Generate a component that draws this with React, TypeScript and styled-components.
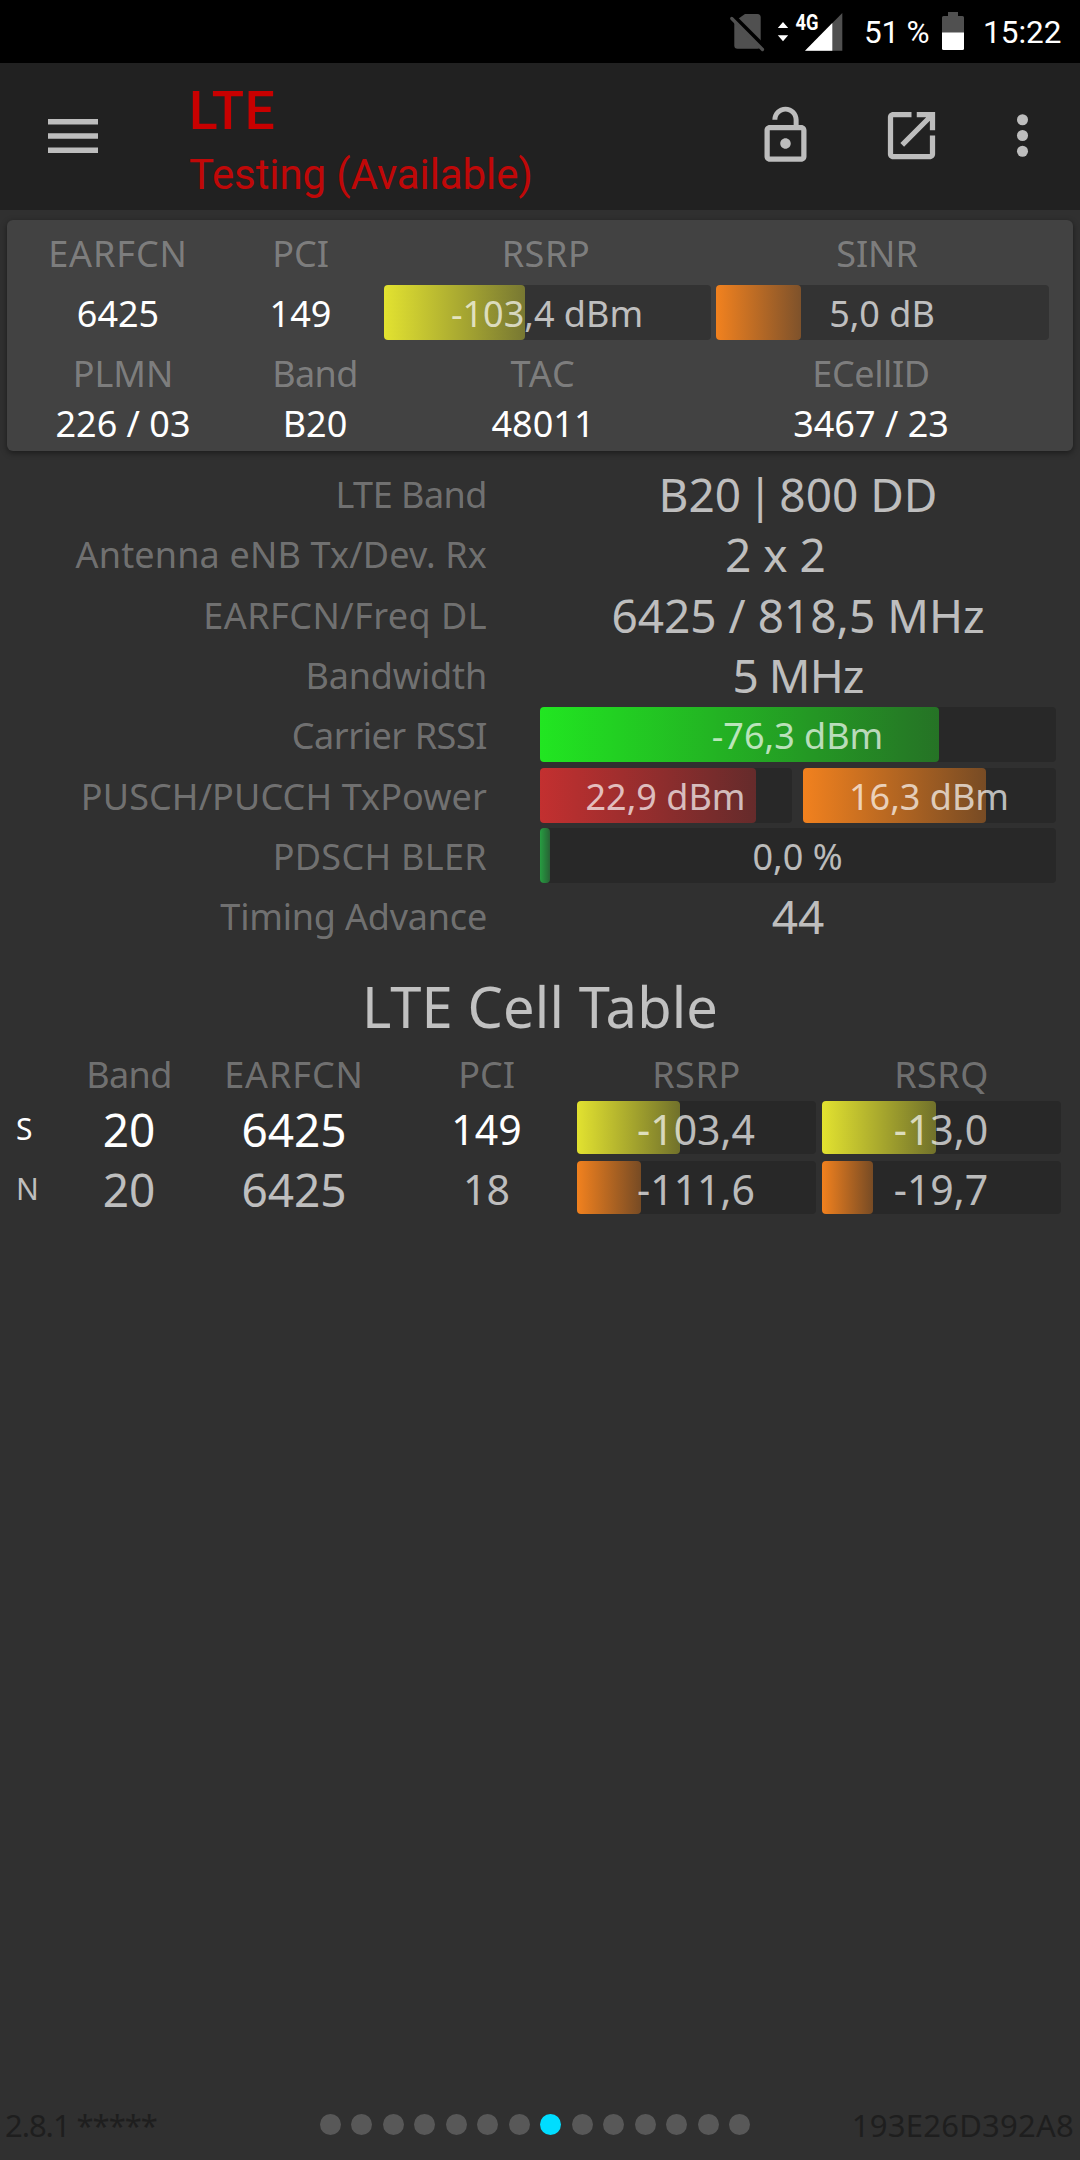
import React from "react";
import styled, { createGlobalStyle } from "styled-components";

const GlobalStyle = createGlobalStyle`
  * { box-sizing: border-box; }
  html, body { margin: 0; padding: 0; background: #303030; }
`;

const Screen = styled.div`
  width: 1080px;
  height: 2160px;
  display: flex;
  flex-direction: column;
  overflow: hidden;
  background: #303030;
  color: rgba(255, 255, 255, 0.7);
  font-family: "Noto Sans", "Open Sans", sans-serif;
  white-space: nowrap;
`;

const StatusBar = styled.header`
  height: 63px;
  flex: none;
  display: flex;
  align-items: center;
  background: #000;
  color: #fff;
  font: 400 31.5px/63px Roboto, sans-serif;
  padding: 0 20px 0 728px;
`;

const StatusGlyphs = styled.svg`
  flex: none;
  width: 120px;
  height: 63px;
  display: block;
`;

const StatusText = styled.span<{ $left: number; $track?: number }>`
  margin-left: ${(p) => p.$left}px;
  letter-spacing: ${(p) => p.$track ?? 0}px;
  padding-top: 2px;
`;

const BatteryIcon = styled.svg`
  flex: none;
  width: 22px;
  height: 63px;
  margin-left: 12px;
  display: block;
`;

const AppBar = styled.nav`
  height: 147px;
  flex: none;
  display: flex;
  align-items: center;
  padding: 0 26px 2px 48px;
  background: #212121;
`;

const MenuIcon = styled.svg`
  width: 50px;
  height: 36px;
  flex: none;
  fill: #bdbdbd;
`;

const Titles = styled.div`
  margin-left: 91px;
  padding-top: 14px;
  flex: 1;
  display: flex;
  flex-direction: column;
  font-family: Roboto, sans-serif;
  color: #c80000;
`;

const Title = styled.h1`
  margin: 0;
  font-size: 53px;
  line-height: 64px;
  font-weight: 500;
  letter-spacing: 0.6px;
`;

const Subtitle = styled.div`
  font-size: 42px;
  line-height: 63px;
  letter-spacing: -0.1px;
  color: #c00808;
`;

const ActionIcon = styled.svg<{ $gap: number }>`
  width: 63px;
  height: 63px;
  flex: none;
  margin-left: ${(p) => p.$gap}px;
  fill: #bdbdbd;
`;

const Card = styled.section`
  flex: none;
  margin: 10px 7px 0;
  height: 231px;
  padding-top: 8px;
  border-radius: 6px;
  background: #424242;
  box-shadow: 0 2px 6px rgba(0, 0, 0, 0.45);
`;

const CardRow = styled.div<{ $cols: string; $height?: number; $top?: number }>`
  display: grid;
  grid-template-columns: ${(p) => p.$cols};
  align-items: center;
  justify-items: center;
  height: ${(p) => p.$height ?? 50}px;
  margin-top: ${(p) => p.$top ?? 0}px;
`;

const Label = styled.span<{ $track?: number; $shift?: number }>`
  display: inline-block;
  font-size: 36px;
  line-height: 50px;
  padding-top: ${(p) => p.$shift ?? 2}px;
  color: rgba(255, 255, 255, 0.32);
  letter-spacing: ${(p) => p.$track ?? 0}px;
`;

const Value = styled.span<{ $size?: number; $bright?: boolean; $track?: number; $shift?: number }>`
  font-size: ${(p) => p.$size ?? 36}px;
  line-height: 50px;
  color: ${(p) => (p.$bright ? "#fff" : "rgba(255, 255, 255, 0.7)")};
  letter-spacing: ${(p) => p.$track ?? 0}px;
  padding-top: ${(p) => p.$shift ?? 0}px;
`;

const BandPrefix = styled.span`
  word-spacing: -5.5px;
`;

const Track = styled.div<{ $width: number; $height?: number; $base?: string; $gap?: number }>`
  display: grid;
  flex: none;
  width: ${(p) => p.$width}px;
  height: ${(p) => p.$height ?? 55}px;
  margin-left: ${(p) => p.$gap ?? 0}px;
  border-radius: 4px;
  background: ${(p) => p.$base ?? "#282828"};
  > * { grid-area: 1 / 1; }
`;

const Fill = styled.div<{ $rgb: string; $from: number }>`
  height: 100%;
  border-radius: 4px;
  background: linear-gradient(90deg, rgba(${(p) => p.$rgb}, ${(p) => p.$from}), rgba(${(p) => p.$rgb}, 0.38));
`;

const Reading = styled.span<{ $size: number; $track: number }>`
  align-self: center;
  justify-self: center;
  font-size: ${(p) => p.$size}px;
  line-height: 50px;
  padding: 2px 1px 0 0;
  letter-spacing: ${(p) => p.$track}px;
`;

const YELLOW = "232, 232, 48";
const ORANGE = "248, 132, 30";
const GREEN = "33, 236, 33";
const RED = "200, 48, 48";
const TEAL = "38, 190, 72";

type MeterProps = {
  width: number;
  fill: number;
  rgb: string;
  text: string;
  height?: number;
  base?: string;
  gap?: number;
  size?: number;
  track?: number;
  from?: number;
};

function Meter({ width, fill, rgb, text, height, base, gap, size = 36, track = 0, from = 0.97 }: MeterProps) {
  return (
    <Track $width={width} $height={height} $base={base} $gap={gap}>
      <Fill $rgb={rgb} $from={from} style={{ width: fill }} />
      <Reading $size={size} $track={track}>{text}</Reading>
    </Track>
  );
}

const Details = styled.section`
  flex: none;
  display: flex;
  flex-direction: column;
  margin-top: 13px;
`;

const DetailRow = styled.div<{ $height: number }>`
  display: flex;
  align-items: center;
  height: ${(p) => p.$height}px;
`;

const DetailLabel = styled.div`
  width: 540px;
  padding-right: 53px;
  text-align: right;
`;

const DetailValue = styled.div<{ $offset?: number }>`
  width: 516px;
  display: flex;
  align-items: center;
  justify-content: center;
  padding-right: ${(p) => p.$offset ?? 0}px;
`;

const TableTitle = styled.h2`
  flex: none;
  margin: 20px 0 0;
  height: 80px;
  text-align: center;
  font-size: 56px;
  font-weight: 400;
  line-height: 80px;
  letter-spacing: 0.15px;
`;

const TableRow = styled.div<{ $height: number; $gap?: number }>`
  flex: none;
  display: grid;
  grid-template-columns: 66px 126px 204px 181px 239px 6px 239px;
  align-items: center;
  justify-items: center;
  height: ${(p) => p.$height}px;
  margin-top: ${(p) => p.$gap ?? 0}px;
`;

const Tag = styled(Value)`
  justify-self: start;
  padding-left: 16px;
`;

const Footer = styled.footer`
  margin-top: auto;
  flex: none;
  height: 71px;
  display: grid;
  grid-template-columns: 314.5px 430.5px 1fr;
  align-items: center;
  padding: 0 6px 0 5px;
  color: #1e1e1e;
  font-size: 31px;
`;

const FooterNote = styled.span<{ $end?: boolean; $track: number }>`
  justify-self: ${(p) => (p.$end ? "end" : "start")};
  letter-spacing: ${(p) => p.$track}px;
  padding-top: 1px;
`;

const Pager = styled.div`
  display: flex;
  gap: 10.5px;
`;

const Dot = styled.i<{ $active: boolean }>`
  flex: none;
  width: 21px;
  height: 21px;
  border-radius: 50%;
  background: ${(p) => (p.$active ? "#00ddff" : "#585858")};
`;

export default function App() {
  return (
    <Screen>
      <GlobalStyle />
      <StatusBar>
        <StatusGlyphs viewBox="728 0 120 63">
          <path d="M745 14H757.5Q760.7 14 760.7 17.500V45.500Q760.7 48.700 757.5 48.700H737.5Q734.300 48.700 734.300 45.500V21.500Z" fill="#505050" />
          <path d="M732 15L766 49" stroke="#000" strokeWidth="5" />
          <path d="M731.800 18.500L762.500 49.500" stroke="#505050" strokeWidth="3.200" strokeLinecap="round" />
          <path d="M777.800 28L783 22L788.200 28ZM777.800 35.200L783 41.200L788.200 35.200Z" fill="#fff" />
          <text x="795.500" y="30" fill="#fff" fontFamily="Roboto" fontWeight="700" fontSize="22.500" textLength="23" lengthAdjust="spacingAndGlyphs">4G</text>
          <path d="M842.300 13V50.700H805Z" fill="#505050" />
          <path d="M832.300 23.100V50.700H805Z" fill="#fff" />
        </StatusGlyphs>
        <StatusText $left={16} $track={-0.2}>51 %</StatusText>
        <BatteryIcon viewBox="0 0 22 63">
          <path d="M6 12H16V16H20.500Q22 16 22 17.500V33H0V17.500Q0 16 1.500 16H6Z" fill="#505050" />
          <path d="M0 32.500H22V48.500Q22 50 20.500 50H1.500Q0 50 0 48.500Z" fill="#fff" />
        </BatteryIcon>
        <StatusText $left={19.5}>15:22</StatusText>
      </StatusBar>

      <AppBar>
        <MenuIcon viewBox="0 0 50 36">
          <path d="M0 1H50V6.500H0ZM0 15.300H50V20.800H0ZM0 29.600H50V35.100H0Z" />
        </MenuIcon>
        <Titles>
          <Title>LTE</Title>
          <Subtitle>Testing (Available)</Subtitle>
        </Titles>
        <ActionIcon $gap={0} viewBox="0 0 24 24">
          <path d="M12 17c1.100 0 2-.9 2-2s-.9-2-2-2-2 .9-2 2 .9 2 2 2zm6-9h-1V6c0-2.760-2.240-5-5-5S7 3.240 7 6h1.900c0-1.710 1.390-3.100 3.100-3.100 1.710 0 3.100 1.390 3.100 3.100v2H6c-1.100 0-2 .9-2 2v10c0 1.100.9 2 2 2h12c1.100 0 2-.9 2-2V10c0-1.100-.9-2-2-2zm0 12H6V10h12v10z" />
        </ActionIcon>
        <ActionIcon $gap={63} viewBox="0 0 24 24">
          <path d="M19 19H5V5h7V3H5c-1.110 0-2 .9-2 2v14c0 1.100.89 2 2 2h14c1.100 0 2-.9 2-2v-7h-2v7zM14 3v2h3.590l-9.830 9.830 1.410 1.410L19 6.410V10h2V3h-7z" />
        </ActionIcon>
        <ActionIcon $gap={48} viewBox="0 0 24 24">
          <circle cx="12" cy="6" r="2.100" />
          <circle cx="12" cy="12" r="2.100" />
          <circle cx="12" cy="18" r="2.100" />
        </ActionIcon>
      </AppBar>

      <Card>
        <CardRow $cols="222px 143px 348px 314px">
          <Label $shift={1} $track={0.9}>EARFCN</Label>
          <Label $shift={1}>PCI</Label>
          <Label $shift={1} $track={0.6}>RSRP</Label>
          <Label $shift={1}>SINR</Label>
        </CardRow>
        <CardRow $cols="222px 143px 12px 327px 5px 333px" $height={55} $top={7}>
          <Value $bright $shift={2}>6425</Value>
          <Value $bright $shift={2}>149</Value>
          <span />
          <Meter width={327} fill={141} rgb={YELLOW} text="-103,4 dBm" base="#333333" />
          <span />
          <Meter width={333} fill={85} rgb={ORANGE} text="5,0 dB" base="#333333" />
        </CardRow>
        <CardRow $cols="232px 152px 304px 352px" $top={8}>
          <Label $shift={1}>PLMN</Label>
          <Label $shift={1} $track={-0.6}>Band</Label>
          <Label $shift={1} $track={0.8}>TAC</Label>
          <Label $shift={1} $track={-0.4}>ECellID</Label>
        </CardRow>
        <CardRow $cols="232px 152px 304px 352px">
          <Value $bright $shift={1}>226 / 03</Value>
          <Value $bright $shift={1}>B20</Value>
          <Value $bright $shift={1}>48011</Value>
          <Value $bright $shift={1}>3467 / 23</Value>
        </CardRow>
      </Card>

      <Details>
        <DetailRow $height={60}>
          <DetailLabel><Label $track={-0.5}>LTE Band</Label></DetailLabel>
          <DetailValue><Value $size={46}><BandPrefix>B20 | </BandPrefix>800 DD</Value></DetailValue>
        </DetailRow>
        <DetailRow $height={60}>
          <DetailLabel><Label $track={0.16}>Antenna eNB Tx/Dev. Rx</Label></DetailLabel>
          <DetailValue $offset={45}><Value $size={46}>2 x 2</Value></DetailValue>
        </DetailRow>
        <DetailRow $height={61}>
          <DetailLabel><Label $track={0.45}>EARFCN/Freq DL</Label></DetailLabel>
          <DetailValue><Value $size={46}>6425 / 818,5 MHz</Value></DetailValue>
        </DetailRow>
        <DetailRow $height={59}>
          <DetailLabel><Label $track={-0.15}>Bandwidth</Label></DetailLabel>
          <DetailValue><Value $size={46} $track={-0.9}>5 MHz</Value></DetailValue>
        </DetailRow>
        <DetailRow $height={61}>
          <DetailLabel><Label $track={-0.45}>Carrier RSSI</Label></DetailLabel>
          <DetailValue><Meter width={516} fill={399} rgb={GREEN} text="-76,3 dBm" /></DetailValue>
        </DetailRow>
        <DetailRow $height={61}>
          <DetailLabel><Label $track={0.1}>PUSCH/PUCCH TxPower</Label></DetailLabel>
          <DetailValue>
            <Meter width={252} fill={216} rgb={RED} text="22,9 dBm" />
            <Meter width={253} fill={183} rgb={ORANGE} text="16,3 dBm" gap={11} />
          </DetailValue>
        </DetailRow>
        <DetailRow $height={59}>
          <DetailLabel><Label $track={0.3}>PDSCH BLER</Label></DetailLabel>
          <DetailValue><Meter width={516} fill={10} rgb={TEAL} from={0.78} text="0,0 %" /></DetailValue>
        </DetailRow>
        <DetailRow $height={61}>
          <DetailLabel><Label $track={-0.2}>Timing Advance</Label></DetailLabel>
          <DetailValue><Value $size={46}>44</Value></DetailValue>
        </DetailRow>
      </Details>

      <TableTitle>LTE Cell Table</TableTitle>
      <TableRow $height={55}>
        <span />
        <Label $track={-0.6}>Band</Label>
        <Label $track={0.9}>EARFCN</Label>
        <Label>PCI</Label>
        <Label $track={0.6}>RSRP</Label>
        <span />
        <Label $track={0.5}>RSRQ</Label>
      </TableRow>
      <TableRow $height={53}>
        <Tag $size={30} $bright $shift={2}>S</Tag>
        <Value $size={46} $bright $shift={3}>20</Value>
        <Value $size={46} $bright $shift={3}>6425</Value>
        <Value $size={41} $bright $shift={2}>149</Value>
        <Meter width={239} height={53} fill={103} rgb={YELLOW} text="-103,4" size={41} />
        <span />
        <Meter width={239} height={53} fill={114} rgb={YELLOW} text="-13,0" size={41} />
      </TableRow>
      <TableRow $height={53} $gap={7}>
        <Tag $size={30} $shift={2}>N</Tag>
        <Value $size={46} $shift={3}>20</Value>
        <Value $size={46} $shift={3}>6425</Value>
        <Value $size={41} $shift={2}>18</Value>
        <Meter width={239} height={53} fill={64} rgb={ORANGE} text="-111,6" size={41} />
        <span />
        <Meter width={239} height={53} fill={51} rgb={ORANGE} text="-19,7" size={41} />
      </TableRow>

      <Footer>
        <FooterNote $track={-1.05}>2.8.1 *****</FooterNote>
        <Pager>
          {Array.from({ length: 14 }, (_, i) => (
            <Dot key={i} $active={i === 7} />
          ))}
        </Pager>
        <FooterNote $end $track={0.25}>193E26D392A8</FooterNote>
      </Footer>
    </Screen>
  );
}
